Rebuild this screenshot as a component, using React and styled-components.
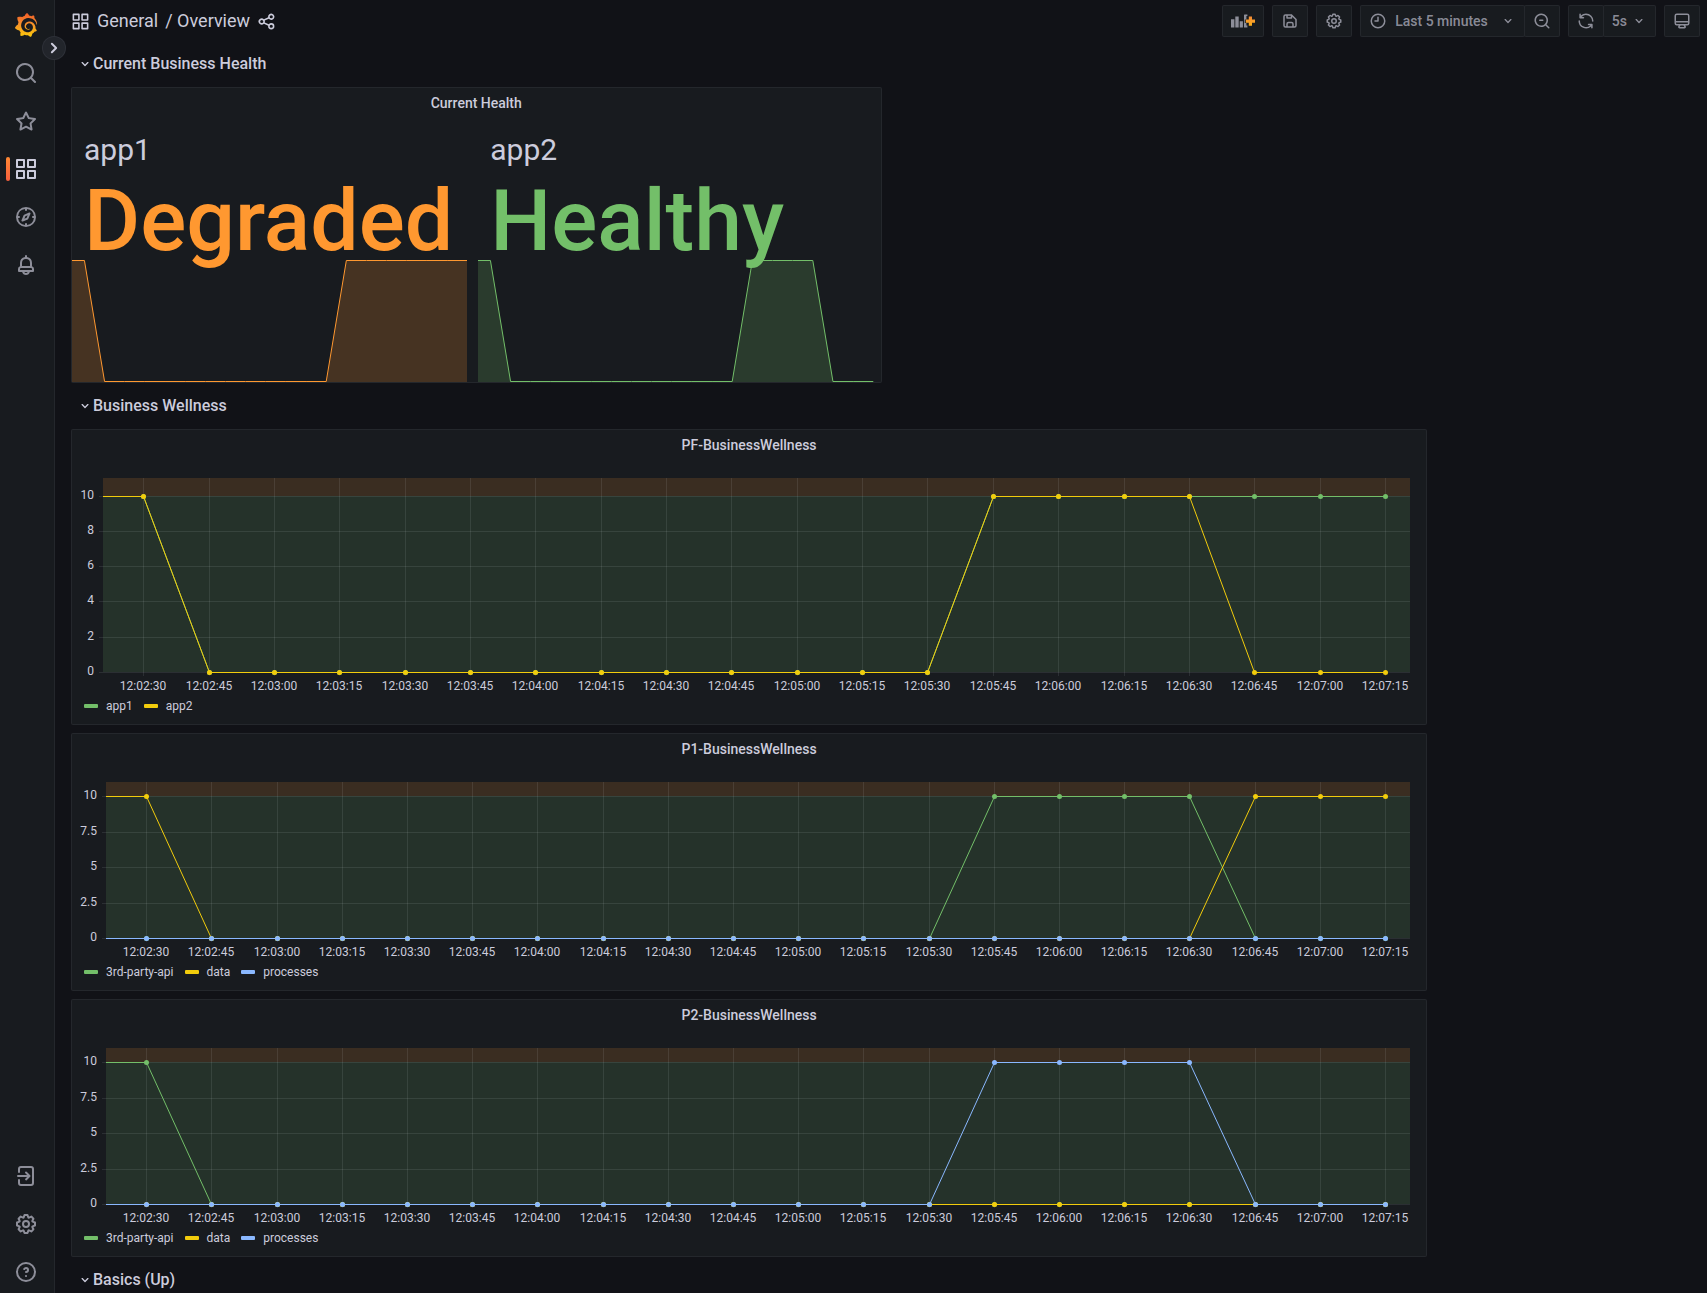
import React, { useEffect, useRef, useState } from 'react';
import styled, { createGlobalStyle } from 'styled-components';
import { SiGrafana } from 'react-icons/si';

const color = {
  canvas: '#111217',
  surface: '#181b1f',
  raised: '#22252b',
  border: 'rgba(204, 204, 220, 0.07)',
  text: '#ccccdc',
  muted: 'rgba(204, 204, 220, 0.65)',
  grid: 'rgba(240, 250, 255, 0.09)',
  green: '#73bf69',
  yellow: '#f2cc0c',
  blue: '#8ab8ff',
  orange: '#ff9830',
};

const GlobalStyle = createGlobalStyle`
  *, *::before, *::after { box-sizing: border-box; }
  body {
    margin: 0;
    background: ${color.canvas};
    color: ${color.text};
    font-family: Roboto, "Liberation Sans", sans-serif;
    font-size: 14px;
  }
  button { font: inherit; color: inherit; }
  h1, h2, h3, p, ul { margin: 0; padding: 0; }
`;

/* ---------- icons ---------- */

const ring = 'M12,2A10,10,0,1,0,22,12,10,10,0,0,0,12,2Zm0,18a8,8,0,1,1,8-8A8,8,0,0,1,12,20Z';
const lens = 'M21.71,20.29,18,16.61A9,9,0,1,0,16.61,18l3.68,3.68a1,1,0,0,0,1.42,0A1,1,0,0,0,21.71,20.29ZM11,18a7,7,0,1,1,7-7A7,7,0,0,1,11,18Z';

const paths = {
  apps: 'M10,13H3a1,1,0,0,0-1,1v7a1,1,0,0,0,1,1h7a1,1,0,0,0,1-1V14A1,1,0,0,0,10,13ZM9,20H4V15H9ZM21,2H14a1,1,0,0,0-1,1v7a1,1,0,0,0,1,1h7a1,1,0,0,0,1-1V3A1,1,0,0,0,21,2ZM20,9H15V4h5Zm1,4H14a1,1,0,0,0-1,1v7a1,1,0,0,0,1,1h7a1,1,0,0,0,1-1V14A1,1,0,0,0,21,13Zm-1,7H15V15h5ZM10,2H3A1,1,0,0,0,2,3v7a1,1,0,0,0,1,1h7a1,1,0,0,0,1-1V3A1,1,0,0,0,10,2ZM9,9H4V4H9Z',
  search: lens,
  searchMinus: lens + 'M13,10H9a1,1,0,0,0,0,2h4a1,1,0,0,0,0-2Z',
  star: 'M22,9.67A1,1,0,0,0,21.14,9l-5.69-.83L12.9,3a1,1,0,0,0-1.8,0L8.55,8.16,2.86,9a1,1,0,0,0-.81.68,1,1,0,0,0,.25,1l4.13,4-1,5.68a1,1,0,0,0,1.47,1.08l5.1-2.67,5.1,2.67a.93.93,0,0,0,.46.12,1,1,0,0,0,.59-.19,1,1,0,0,0,.4-1l-1-5.68,4.13-4A1,1,0,0,0,22,9.67Zm-6.15,4a1,1,0,0,0-.29.88l.72,4.2-3.76-2a1.06,1.06,0,0,0-.94,0l-3.76,2,.72-4.2a1,1,0,0,0-.29-.88l-3-3,4.21-.61a1,1,0,0,0,.76-.55L12,5.7l1.88,3.82a1,1,0,0,0,.76.55l4.21.61Z',
  compass: 'M12,2A10,10,0,1,0,22,12,10,10,0,0,0,12,2Zm1,17.93V19a1,1,0,0,0-2,0v.93A8,8,0,0,1,4.07,13H5a1,1,0,0,0,0-2H4.07A8,8,0,0,1,11,4.07V5a1,1,0,0,0,2,0V4.07A8,8,0,0,1,19.93,11H19a1,1,0,0,0,0,2h.93A8,8,0,0,1,13,19.93ZM15.14,7.55l-5,2.12a1,1,0,0,0-.52.52l-2.12,5a1,1,0,0,0,.21,1.1,1,1,0,0,0,.7.29.93.93,0,0,0,.4-.08l5-2.12a1,1,0,0,0,.52-.52l2.12-5a1,1,0,0,0-1.31-1.31Zm-2.49,5.1-2.28,1,1-2.28,2.28-1Z',
  bell: 'M18,13.18V10a6,6,0,0,0-5-5.91V3a1,1,0,0,0-2,0V4.09A6,6,0,0,0,6,10v3.18A3,3,0,0,0,4,16v2a1,1,0,0,0,1,1H8.14a4,4,0,0,0,7.72,0H19a1,1,0,0,0,1-1V16A3,3,0,0,0,18,13.18ZM8,10a4,4,0,0,1,8,0v3H8Zm4,10a2,2,0,0,1-1.72-1h3.44A2,2,0,0,1,12,20Zm6-3H6V16a1,1,0,0,1,1-1H17a1,1,0,0,1,1,1Z',
  signin: 'M7,2H17a3,3,0,0,1,3,3V19a3,3,0,0,1-3,3H7a3,3,0,0,1-3-3V16a1,1,0,0,1,2,0v3a1,1,0,0,0,1,1H17a1,1,0,0,0,1-1V5a1,1,0,0,0-1-1H7A1,1,0,0,0,6,5V8A1,1,0,0,1,4,8V5A3,3,0,0,1,7,2ZM11.3,7.8a1,1,0,0,1,1.4,0l3.5,3.5a1,1,0,0,1,0,1.4l-3.5,3.5a1,1,0,0,1-1.4-1.4L13.1,13H4a1,1,0,0,1,0-2h9.1L11.3,9.2A1,1,0,0,1,11.3,7.8Z',
  cog: 'M21.32,9.55l-1.89-.63.89-1.78A1,1,0,0,0,20.13,6L18,3.87a1,1,0,0,0-1.15-.19l-1.78.89-.63-1.89A1,1,0,0,0,13.5,2h-3a1,1,0,0,0-.95.68L8.92,4.57,7.14,3.68A1,1,0,0,0,6,3.87L3.87,6a1,1,0,0,0-.19,1.15l.89,1.78-1.89.63A1,1,0,0,0,2,10.5v3a1,1,0,0,0,.68.95l1.89.63-.89,1.78A1,1,0,0,0,3.87,18L6,20.13a1,1,0,0,0,1.15.19l1.78-.89.63,1.89a1,1,0,0,0,.95.68h3a1,1,0,0,0,.95-.68l.63-1.89,1.78.89A1,1,0,0,0,18,20.13L20.13,18a1,1,0,0,0,.19-1.15l-.89-1.78,1.89-.63A1,1,0,0,0,22,13.5v-3A1,1,0,0,0,21.32,9.55ZM20,12.78l-1.2.4A2,2,0,0,0,17.64,16l.57,1.14-1.1,1.1L16,17.64a2,2,0,0,0-2.79,1.16l-.4,1.2H11.22l-.4-1.2A2,2,0,0,0,8,17.64l-1.14.57-1.1-1.1L6.36,16A2,2,0,0,0,5.2,13.18L4,12.78V11.22l1.2-.4A2,2,0,0,0,6.36,8L5.79,6.89l1.1-1.1L8,6.36A2,2,0,0,0,10.82,5.2l.4-1.2h1.56l.4,1.2A2,2,0,0,0,16,6.36l1.14-.57,1.1,1.1L17.64,8a2,2,0,0,0,1.16,2.79l1.2.4ZM12,8a4,4,0,1,0,4,4A4,4,0,0,0,12,8Zm0,6a2,2,0,1,1,2-2A2,2,0,0,1,12,14Z',
  help: 'M11.29,15.29a1.58,1.58,0,0,0-.12.15.76.76,0,0,0-.09.18.64.64,0,0,0-.06.18,1.36,1.36,0,0,0,0,.2.84.84,0,0,0,.08.38.9.9,0,0,0,.54.54.94.94,0,0,0,.76,0,.9.9,0,0,0,.54-.54A1,1,0,0,0,13,16a1,1,0,0,0-.29-.71A1,1,0,0,0,11.29,15.29ZM12,7A3,3,0,0,0,9.4,8.5a1,1,0,1,0,1.73,1A1,1,0,0,1,12,9a1,1,0,0,1,0,2,1,1,0,1,0,0,2,3,3,0,0,0,0-6Z' + ring,
  share: 'M18,14a4,4,0,0,0-3.08,1.48l-5.1-2.35a3.64,3.64,0,0,0,0-2.26l5.1-2.35A4,4,0,1,0,14,6a4.17,4.17,0,0,0,.07.71L8.79,9.14a4,4,0,1,0,0,5.72l5.28,2.43A4.17,4.17,0,0,0,14,18a4,4,0,1,0,4-4ZM18,4a2,2,0,1,1-2,2A2,2,0,0,1,18,4ZM6,14a2,2,0,1,1,2-2A2,2,0,0,1,6,14Zm12,6a2,2,0,1,1,2-2A2,2,0,0,1,18,20Z',
  save: 'M20.71,9.29l-6-6a1,1,0,0,0-.32-.21A1.09,1.09,0,0,0,14,3H6A3,3,0,0,0,3,6V18a3,3,0,0,0,3,3H18a3,3,0,0,0,3-3V10A1,1,0,0,0,20.71,9.29ZM9,5h4V7H9Zm6,14H9V16a1,1,0,0,1,1-1h4a1,1,0,0,1,1,1Zm4-1a1,1,0,0,1-1,1H17V16a3,3,0,0,0-3-3H10a3,3,0,0,0-3,3v3H6a1,1,0,0,1-1-1V6A1,1,0,0,1,6,5H7V8A1,1,0,0,0,8,9h6a1,1,0,0,0,1-1V6.41l4,4Z',
  clock: ring + 'M12,6a1,1,0,0,0-1,1v4H8a1,1,0,0,0,0,2h4a1,1,0,0,0,1-1V7A1,1,0,0,0,12,6Z',
  sync: 'M19.91,15.51H15.38a1,1,0,0,0,0,2h2.4A8,8,0,0,1,4,12a1,1,0,1,0-2,0,10,10,0,0,0,16.88,7.23V21a1,1,0,0,0,2,0V16.5A1,1,0,0,0,19.91,15.51ZM12,2A10,10,0,0,0,5.12,4.77V3a1,1,0,0,0-2,0V7.5a1,1,0,0,0,1,1h4.5a1,1,0,0,0,0-2H6.22A8,8,0,0,1,20,12a1,1,0,0,0,2,0A10,10,0,0,0,12,2Z',
  down: 'M17,9.17a1,1,0,0,0-1.41,0L12,12.71,8.46,9.17a1,1,0,0,0-1.41,0,1,1,0,0,0,0,1.42l4.24,4.24a1,1,0,0,0,1.42,0L17,10.59A1,1,0,0,0,17,9.17Z',
  right: 'M14.83,11.29,10.59,7.05a1,1,0,0,0-1.42,0,1,1,0,0,0,0,1.41L12.71,12,9.17,15.54a1,1,0,0,0,0,1.41,1,1,0,0,0,.71.29,1,1,0,0,0,.71-.29l4.24-4.24A1,1,0,0,0,14.83,11.29Z',
  monitor: 'M19,2H5A3,3,0,0,0,2,5V15a3,3,0,0,0,3,3H7.64l-.58,1a2,2,0,0,0,0,2,2,2,0,0,0,1.75,1h6.46A2,2,0,0,0,17,21a2,2,0,0,0,0-2l-.59-1H19a3,3,0,0,0,3-3V5A3,3,0,0,0,19,2ZM8.77,20,10,18H14l1.2,2ZM20,15a1,1,0,0,1-1,1H5a1,1,0,0,1-1-1V14H20Zm0-3H4V5A1,1,0,0,1,5,4H19a1,1,0,0,1,1,1Z',
};

const IconSvg = styled.svg`
  display: block;
  flex: none;
  fill: currentColor;
`;

const Icon = ({ name, size = 16 }) => (
  <IconSvg viewBox="0 0 24 24" width={size} height={size} aria-hidden="true">
    <path d={paths[name]} />
  </IconSvg>
);

const AddPanelIcon = () => (
  <IconSvg viewBox="0 0 24 14" width="24" height="14" aria-hidden="true">
    <path d="M0 5.200h3.400V13.500H0zM4.300 2.500h3.400v11H4.300zM8.700 7.200h3.200v6.300H8.700zM13 1a.6.6 0 0 1 .6-.6h2.800V2h-1v3.500h-1.600v3.400h1.600v2.600h1v2H13z" />
    <path d="M17.800 2.500h3.200v3h3v3.200h-3v3h-3.200v-3h-3V5.500h3z" fill="url(#plus-fill)" />
    <defs>
      <linearGradient id="plus-fill" x1="0" y1="0" x2="0" y2="1">
        <stop offset="0" stopColor="#f58a36" />
        <stop offset="1" stopColor="#fbb01a" />
      </linearGradient>
    </defs>
  </IconSvg>
);

const LogoDefs = styled.svg`
  position: absolute;
  width: 0;
  height: 0;
`;

const Logo = () => (
  <>
    <LogoDefs aria-hidden="true">
      <defs>
        <linearGradient id="logo-fill" x1="0" y1="0" x2="0" y2="1">
          <stop offset="0" stopColor="#f05a28" />
          <stop offset="0.4" stopColor="#f58a2c" />
          <stop offset="1" stopColor="#fbca0a" />
        </linearGradient>
      </defs>
    </LogoDefs>
    <SiGrafana size={24} fill="url(#logo-fill)" aria-hidden="true" />
  </>
);

/* ---------- shell ---------- */

const Shell = styled.div`
  display: grid;
  grid-template-columns: 55px minmax(0, 1fr);
  height: 100vh;
  overflow: hidden;
`;

const Sidebar = styled.nav`
  position: relative;
  display: flex;
  flex-direction: column;
  justify-content: space-between;
  padding-top: 4px;
  background: ${color.surface};
  border-right: 1px solid ${color.border};
`;

const NavGroup = styled.div`
  display: flex;
  flex-direction: column;
  gap: 6px;
`;

const NavLink = styled.a`
  position: relative;
  display: flex;
  align-items: center;
  justify-content: center;
  width: 52px;
  height: 42px;
  color: ${(p) => (p.$active ? color.text : color.muted)};

  &::before {
    content: '';
    display: ${(p) => (p.$active ? 'block' : 'none')};
    position: absolute;
    left: 6px;
    top: 9px;
    width: 4px;
    height: 24px;
    border-radius: 2px;
    background: linear-gradient(#ff8833, #f55f3e);
  }
`;

const ExpandButton = styled.button`
  position: absolute;
  top: 36px;
  right: -12px;
  z-index: 1;
  display: flex;
  align-items: center;
  justify-content: center;
  width: 24px;
  height: 24px;
  padding: 0;
  border: 1px solid ${color.border};
  border-radius: 50%;
  background: ${color.raised};
`;

const Main = styled.main`
  padding: 0 7px 0 16px;
  overflow: hidden;
`;

/* ---------- toolbar ---------- */

const Toolbar = styled.header`
  display: flex;
  align-items: center;
  justify-content: space-between;
  height: 42px;
  margin-bottom: 7px;
`;

const Crumbs = styled.div`
  display: flex;
  align-items: center;
  gap: 7px;
`;

const CrumbTitle = styled.h1`
  display: flex;
  gap: 7px;
  font-size: 18px;
  font-weight: 400;
  line-height: 24px;

  a { color: inherit; text-decoration: none; }
`;

const PlainButton = styled.button`
  display: flex;
  padding: 0;
  border: 0;
  background: none;
`;

const Actions = styled.div`
  display: flex;
  gap: 8px;
`;

const ButtonGroup = styled.div`
  display: flex;

  > * + * { margin-left: -1px; }
`;

const ToolButton = styled.button`
  display: flex;
  align-items: center;
  justify-content: center;
  gap: ${(p) => (p.$tight ? '4px' : '8px')};
  height: 32px;
  padding: 0 8px;
  border: 1px solid ${color.border};
  border-radius: 2px;
  background: ${color.surface};
  color: ${color.muted};
  font-weight: 500;
  white-space: nowrap;
`;

const PickerText = styled.span`
  margin-right: 4px;
`;

/* ---------- dashboard grid ---------- */

const Grid = styled.div`
  display: grid;
  grid-template-columns: repeat(24, minmax(0, 1fr));
  grid-auto-rows: 30px;
  gap: 8px;
`;

const RowHeader = styled.h2`
  grid-column: 1 / -1;
  display: flex;
  align-items: center;
  font-size: 16px;
  font-weight: 500;
`;

const RowToggle = styled.button`
  display: flex;
  align-items: center;
  padding: 0 0 0 6px;
  border: 0;
  background: none;
  line-height: 24px;
`;

const PanelBox = styled.section`
  grid-column: 1 / span ${(p) => p.$cols};
  grid-row: span ${(p) => p.$rows};
  display: flex;
  flex-direction: column;
  min-height: 0;
  border: 1px solid ${color.border};
  border-radius: 2px;
  background: ${color.surface};
`;

const PanelTitle = styled.h3`
  flex: none;
  font-size: 14px;
  font-weight: 500;
  line-height: 30px;
  text-align: center;
`;

const Row = ({ title }) => (
  <RowHeader>
    <RowToggle type="button">
      <Icon name="down" />
      {title}
    </RowToggle>
  </RowHeader>
);

const Panel = ({ title, cols, rows, children }) => (
  <PanelBox $cols={cols} $rows={rows} aria-label={title}>
    <PanelTitle>{title}</PanelTitle>
    {children}
  </PanelBox>
);

/* ---------- stat panel ---------- */

const STEP = 15;
const LEAD = 9.25;
const RANGE = 300;

const Stats = styled.div`
  flex: 1;
  display: grid;
  grid-template-columns: 1fr 1fr;
  gap: 11px;
  padding-right: 7px;
`;

const Stat = styled.div`
  position: relative;
  padding: 14px 12px 0;
`;

const StatLabel = styled.div`
  position: relative;
  font-size: 30px;
  line-height: 36px;
`;

const StatValue = styled.div`
  position: relative;
  color: ${(p) => p.$color};
  font-size: 86px;
  font-weight: 500;
  line-height: 106px;
  white-space: nowrap;
`;

const SparkSvg = styled.svg`
  position: absolute;
  left: 0;
  bottom: 0;
  width: 100%;
  height: 122px;
`;

const Spark = ({ values, stroke }) => {
  const end = LEAD + STEP * (values.length - 1);
  const y = (v) => (v ? 0.5 : 121.5);
  const pts = [[0, y(values[0])], ...values.map((v, i) => [LEAD + i * STEP, y(v)])];
  const line = pts.map((p) => p.join(',')).join(' ');
  return (
    <SparkSvg viewBox={`0 0 ${end} 122`} preserveAspectRatio="none" aria-hidden="true">
      <polygon points={`0,122 ${line} ${end},122`} fill={stroke} fillOpacity="0.2" />
      <polyline points={line} fill="none" stroke={stroke} vectorEffect="non-scaling-stroke" />
    </SparkSvg>
  );
};

/* ---------- time series panel ---------- */

const SeriesBody = styled.div`
  flex: 1;
  display: flex;
  flex-direction: column;
  min-height: 0;
  padding: 0 8px 8px;
`;

const Canvas = styled.div`
  flex: 1;
  min-height: 0;
  overflow: hidden;
`;

const ChartSvg = styled.svg`
  display: block;

  text {
    fill: ${color.text};
    font-size: 12px;
  }
`;

const Legend = styled.ul`
  display: flex;
  flex: none;
  gap: 11px;
  height: 20px;
  padding-left: 4px;
  list-style: none;
`;

const LegendItem = styled.li`
  display: flex;
  align-items: center;
  gap: 8px;
  font-size: 12px;
  line-height: 20px;

  &::before {
    content: '';
    width: 14px;
    height: 4px;
    border-radius: 1px;
    background: ${(p) => p.$color};
  }
`;

const timeLabel = (i) => {
  const s = 2 * 60 + 30 + i * STEP;
  const pad = (n) => String(n).padStart(2, '0');
  return `12:${pad(Math.floor(s / 60))}:${pad(s % 60)}`;
};

const Chart = ({ series, ticks }) => {
  const ref = useRef(null);
  const [size, setSize] = useState({ w: 0, h: 0 });

  useEffect(() => {
    const measure = () => setSize({ w: ref.current.clientWidth, h: ref.current.clientHeight });
    const observer = new ResizeObserver(measure);
    observer.observe(ref.current);
    measure();
    return () => observer.disconnect();
  }, []);

  const left = ticks.some((t) => t % 1) ? 26 : 23;
  const top = 18;
  const right = size.w - 8;
  const bottom = size.h - 24;
  const x = (i) => Math.round(left + ((LEAD + i * STEP) / RANGE) * (right - left)) + 0.5;
  const y = (v) => Math.round(bottom - (v / 11) * (bottom - top)) + 0.5;

  return (
    <Canvas ref={ref}>
      {size.w > 0 && (
        <ChartSvg width={size.w} height={size.h} role="img" aria-label="Wellness over time">
          <rect x={left} y={top} width={right - left} height={y(10) - 0.5 - top} fill={color.orange} fillOpacity="0.15" />
          <rect x={left} y={y(10) - 0.5} width={right - left} height={bottom - y(10) + 0.5} fill={color.green} fillOpacity="0.15" />
          {ticks.map((t) => (
            <g key={t}>
              <line x1={left - 4} x2={right} y1={y(t)} y2={y(t)} stroke={color.grid} />
              <text x={left - 9} y={y(t) + 2.5} textAnchor="end">{t}</text>
            </g>
          ))}
          {series[0].values.map((_, i) => (
            <g key={i}>
              <line x1={x(i)} x2={x(i)} y1={top} y2={bottom + 4} stroke={color.grid} />
              <text x={x(i) - 0.5} y={bottom + 18} textAnchor="middle">{timeLabel(i)}</text>
            </g>
          ))}
          {series.map((s) => (
            <g key={s.name}>
              <polyline
                points={[`${left},${y(s.values[0])}`, ...s.values.map((v, i) => `${x(i)},${y(v)}`)].join(' ')}
                fill="none"
                stroke={s.color}
              />
              {s.values.map((v, i) => (
                <circle key={i} cx={x(i)} cy={y(v)} r="2.5" fill={s.color} />
              ))}
            </g>
          ))}
        </ChartSvg>
      )}
    </Canvas>
  );
};

const SeriesPanel = ({ title, rows, series, ticks }) => (
  <Panel title={title} cols={20} rows={rows}>
    <SeriesBody>
      <Chart series={series} ticks={ticks} />
      <Legend>
        {series.map((s) => (
          <LegendItem key={s.name} $color={s.color}>{s.name}</LegendItem>
        ))}
      </Legend>
    </SeriesBody>
  </Panel>
);

/* ---------- data: one sample every 15 s, 12:02:30 to 12:07:15 ---------- */

const samples = (...indexes) => Array.from({ length: 20 }, (_, i) => (indexes.includes(i) ? 10 : 0));

const app1 = samples(0, 13, 14, 15, 16, 17, 18, 19);
const app2 = samples(0, 13, 14, 15, 16);
const evenTicks = [0, 2, 4, 6, 8, 10];
const quarterTicks = [0, 2.5, 5, 7.5, 10];

const navTop = [
  ['search', 'Search'],
  ['star', 'Starred'],
  ['apps', 'Dashboards'],
  ['compass', 'Explore'],
  ['bell', 'Alerting'],
];
const navBottom = [
  ['signin', 'Sign in'],
  ['cog', 'Configuration'],
  ['help', 'Help'],
];

export default function App() {
  return (
    <>
      <GlobalStyle />
      <Shell>
        <Sidebar aria-label="Main menu">
          <NavGroup>
            <NavLink href="#home" aria-label="Home"><Logo /></NavLink>
            {navTop.map(([icon, label]) => (
              <NavLink key={icon} href={`#${icon}`} aria-label={label} $active={icon === 'apps'}>
                <Icon name={icon} size={24} />
              </NavLink>
            ))}
          </NavGroup>
          <NavGroup>
            {navBottom.map(([icon, label]) => (
              <NavLink key={icon} href={`#${icon}`} aria-label={label}>
                <Icon name={icon} size={24} />
              </NavLink>
            ))}
          </NavGroup>
          <ExpandButton type="button" aria-label="Expand menu"><Icon name="right" size={24} /></ExpandButton>
        </Sidebar>

        <Main>
          <Toolbar>
            <Crumbs>
              <Icon name="apps" size={19} />
              <CrumbTitle>
                <a href="#general">General</a>
                <a href="#overview">/ Overview</a>
              </CrumbTitle>
              <PlainButton type="button" aria-label="Share dashboard"><Icon name="share" size={19} /></PlainButton>
            </Crumbs>
            <Actions>
              <ToolButton type="button" aria-label="Add panel"><AddPanelIcon /></ToolButton>
              <ToolButton type="button" aria-label="Save dashboard"><Icon name="save" size={18} /></ToolButton>
              <ToolButton type="button" aria-label="Dashboard settings"><Icon name="cog" size={18} /></ToolButton>
              <ButtonGroup>
                <ToolButton type="button">
                  <Icon name="clock" size={18} />
                  <PickerText>Last 5 minutes</PickerText>
                  <Icon name="down" />
                </ToolButton>
                <ToolButton type="button" aria-label="Zoom out"><Icon name="searchMinus" size={18} /></ToolButton>
              </ButtonGroup>
              <ButtonGroup>
                <ToolButton type="button" aria-label="Refresh"><Icon name="sync" size={18} /></ToolButton>
                <ToolButton type="button" $tight>5s<Icon name="down" /></ToolButton>
              </ButtonGroup>
              <ToolButton type="button" aria-label="Cycle view mode"><Icon name="monitor" size={18} /></ToolButton>
            </Actions>
          </Toolbar>

          <Grid>
            <Row title="Current Business Health" />
            <Panel title="Current Health" cols={12} rows={8}>
              <Stats>
                <Stat>
                  <Spark values={app1} stroke={color.orange} />
                  <StatLabel>app1</StatLabel>
                  <StatValue $color={color.orange}>Degraded</StatValue>
                </Stat>
                <Stat>
                  <Spark values={app2} stroke={color.green} />
                  <StatLabel>app2</StatLabel>
                  <StatValue $color={color.green}>Healthy</StatValue>
                </Stat>
              </Stats>
            </Panel>

            <Row title="Business Wellness" />
            <SeriesPanel
              title="PF-BusinessWellness"
              rows={8}
              ticks={evenTicks}
              series={[
                { name: 'app1', color: color.green, values: app1 },
                { name: 'app2', color: color.yellow, values: app2 },
              ]}
            />
            <SeriesPanel
              title="P1-BusinessWellness"
              rows={7}
              ticks={quarterTicks}
              series={[
                { name: '3rd-party-api', color: color.green, values: samples(13, 14, 15, 16) },
                { name: 'data', color: color.yellow, values: samples(0, 17, 18, 19) },
                { name: 'processes', color: color.blue, values: samples() },
              ]}
            />
            <SeriesPanel
              title="P2-BusinessWellness"
              rows={7}
              ticks={quarterTicks}
              series={[
                { name: '3rd-party-api', color: color.green, values: samples(0) },
                { name: 'data', color: color.yellow, values: samples() },
                { name: 'processes', color: color.blue, values: samples(13, 14, 15, 16) },
              ]}
            />

            <Row title="Basics (Up)" />
          </Grid>
        </Main>
      </Shell>
    </>
  );
}
